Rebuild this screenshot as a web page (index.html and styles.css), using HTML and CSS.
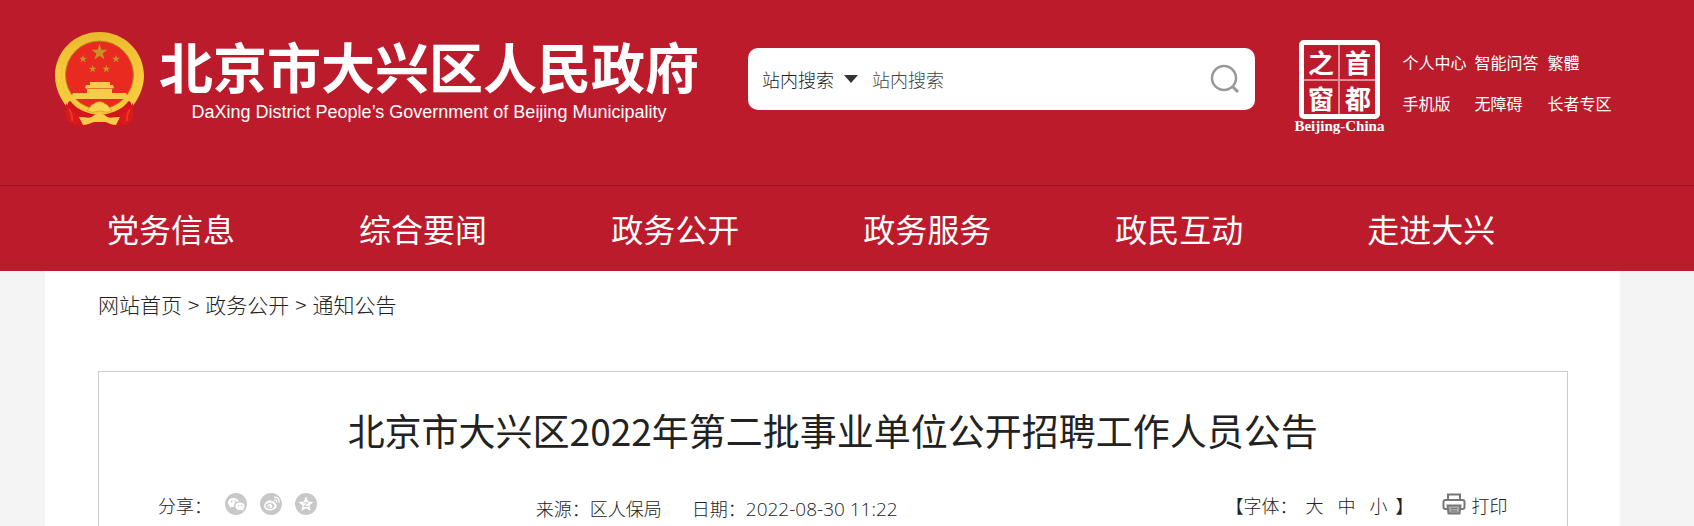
FILE: index.html
```html
<!DOCTYPE html>
<html lang="zh-CN">
<head>
    <meta charset="UTF-8">
    <meta name="viewport" content="width=device-width, initial-scale=1.0">
    <title>北京市大兴区人民政府</title>
    <link rel="stylesheet" href="styles.css">
</head>
<body>
    <header class="header">
        <div class="wrap top">
            <a href="#" class="logo">
                <svg class="emblem" viewBox="0 0 89 96" aria-hidden="true">
                    <defs>
                        <linearGradient id="gold" x1="0" y1="0" x2="0" y2="1">
                            <stop offset="0" stop-color="#e9b92c"/>
                            <stop offset=".5" stop-color="#f9cb3c"/>
                            <stop offset="1" stop-color="#f6c93f"/>
                        </linearGradient>
                        <path id="star" d="M0-10 2.3-3.1 9.5-3.1 3.7 1.2 5.9 8.1 0 3.8-5.9 8.1-3.7 1.2-9.5-3.1-2.3-3.1z"/>
                    </defs>
                    <path d="M12 64 Q9 78 12 89 Q18 96 30 95 L44 92 L60 95 Q72 96 77 89 Q80 78 77 64 Q60 80 44 80 Q28 80 12 64z" fill="#d3161c"/>
                    <path d="M44.500 1 C69 1 89 20 89 45 C89 58 82 70 77 76 C76 70 74 68 72 72 C66 79 56 83 44.500 84 C33 83 23 79 17 72 C15 68 13 70 12 76 C7 70 0 58 0 45 C0 20 20 1 44.500 1z" fill="url(#gold)"/>
                    <circle cx="44.500" cy="44" r="38" fill="none" stroke="#f0bd35" stroke-width="1" stroke-dasharray="3 2"/>
                    <circle cx="44.500" cy="44" r="34" fill="#e92a20" stroke="#b98a20" stroke-width="1"/>
                    <g fill="#c79127">
                        <use href="#star" transform="translate(44.500 21.500) scale(.85)"/>
                        <use href="#star" transform="translate(28 28) scale(.42)"/>
                        <use href="#star" transform="translate(61 28) scale(.42)"/>
                        <use href="#star" transform="translate(37.700 38) scale(.42)"/>
                        <use href="#star" transform="translate(51.300 38) scale(.42)"/>
                    </g>
                    <path d="M35 51h20v3h3l1 3-2 1v4h14l3 6H15l3-6h14v-4l-2-1 1-3h4z" fill="#f8cc49"/>
                    <path d="M32 57.500h26" stroke="#dc7a2a" stroke-width="1"/>
                    <path d="M11 72q5 8 13 12l4 3-8 7q-6-2-8-5-2-8-1-17zM78 72q-5 8-13 12l-4 3 8 7q6-2 8-5 2-8 1-17z" fill="#d81a1c"/>
                    <path d="M32 79c3 0 3-6 7-6 2-3 9-3 11 0 4 0 4 6 7 6-4 4-8 1-12 1s-9 3-13-1z" fill="#fbd34f" stroke="#c9941f" stroke-width=".6"/>
                    <path d="M24 86c7 0 11 2 14-1 4-3 9-3 13 0 3 3 7 1 14 1l-4 8c-6 0-8-3-11-3s-9 0-11 0-5 3-11 3z" fill="#f8cc49"/>
                    <path d="M14 78q4 7 3 12M75 78q-4 7-3 12" fill="none" stroke="#ee3526" stroke-width="2"/>
                </svg>
                <span class="logo-text">
                    <span class="logo-cn">北京市大兴区人民政府</span>
                    <span class="logo-en">DaXing District People’s Government of Beijing Municipality</span>
                </span>
            </a>
            <form class="search">
                <select class="search-type" aria-label="搜索范围">
                    <option>站内搜索</option>
                </select>
                <svg class="caret" viewBox="0 0 14 8" aria-hidden="true"><path d="M0 0h14L7 8z" fill="#333"/></svg>
                <input type="text" class="search-input" placeholder="站内搜索" aria-label="站内搜索">
                <button type="submit" class="search-btn" aria-label="搜索">
                    <svg viewBox="0 0 30 30" fill="none" stroke="#999" stroke-width="2.500"><circle cx="14" cy="14" r="12"/><path d="M22 22l6 6" stroke-width="3"/></svg>
                </button>
            </form>
            <a href="#" class="seal">
                <span class="seal-box">
                    <span>之</span><span>首</span>
                    <span>窗</span><span>都</span>
                </span>
                <span class="seal-en">Beijing-China</span>
            </a>
            <div class="links">
                <a href="#">个人中心</a>
                <a href="#">智能问答</a>
                <a href="#">繁體</a>
                <a href="#">手机版</a>
                <a href="#">无障碍</a>
                <a href="#">长者专区</a>
            </div>
        </div>
        <nav class="nav">
            <ul class="wrap">
                <li><a href="#">党务信息</a></li>
                <li><a href="#">综合要闻</a></li>
                <li><a href="#">政务公开</a></li>
                <li><a href="#">政务服务</a></li>
                <li><a href="#">政民互动</a></li>
                <li><a href="#">走进大兴</a></li>
            </ul>
        </nav>
    </header>
    <main class="wrap main">
        <div class="crumb">
            <a href="#">网站首页</a>
            <span>&gt;</span>
            <a href="#">政务公开</a>
            <span>&gt;</span>
            <a href="#">通知公告</a>
        </div>
        <article class="article">
            <h1>北京市大兴区2022年第二批事业单位公开招聘工作人员公告</h1>
            <div class="meta">
                <div class="share">
                    <span>分享：</span>
                    <a href="#" aria-label="微信">
                        <svg viewBox="0 0 22 22"><circle cx="11" cy="11" r="11" fill="#c8c8c8"/><path d="M8.500 5C5.300 5 3 7 3 9.500c0 1.400.7 2.600 1.900 3.400L4.400 15l2.200-1.200c.6.2 1.300.2 1.900.2h.6C8.500 11 11 8.400 14 8.600 13.500 6.500 11.300 5 8.500 5z" fill="#fff"/><path d="M15 9.500c-2.700 0-4.700 1.700-4.700 3.800s2 3.800 4.700 3.800c.6 0 1.100-.1 1.600-.2l1.900 1-.5-1.700c1-.7 1.600-1.700 1.600-2.900 0-2.100-2-3.800-4.600-3.800z" fill="#fff"/><g fill="#c8c8c8"><circle cx="6.700" cy="8.500" r=".9"/><circle cx="10.400" cy="8.500" r=".9"/><circle cx="13.500" cy="12.500" r=".7"/><circle cx="16.600" cy="12.500" r=".7"/></g></svg>
                    </a>
                    <a href="#" aria-label="微博">
                        <svg viewBox="0 0 22 22"><circle cx="11" cy="11" r="11" fill="#c8c8c8"/><path d="M9 7.200c1.600-.7 2.600 0 2.200 1.500 2.200-.9 3.900-.4 3.400 1.300 1.400.4 2.200 1.300 2.200 2.500 0 2.700-3.300 4.900-6.800 4.900-3.300 0-6-1.600-6-4.200C4 11 6.400 8.200 9 7.200z" fill="#fff"/><ellipse cx="10" cy="13" rx="4.300" ry="3" fill="#c8c8c8"/><ellipse cx="9.800" cy="13.200" rx="2.500" ry="2.100" fill="#fff"/><circle cx="9" cy="13.700" r="1" fill="#c8c8c8"/><path d="M14.200 6.800c1.700-.3 2.800 1 2.400 2.500M14 4.200c3.500-.6 5.900 2.200 5 5.600" fill="none" stroke="#fff" stroke-width="1.200"/></svg>
                    </a>
                    <a href="#" aria-label="QQ空间">
                        <svg viewBox="0 0 22 22"><circle cx="11" cy="11" r="11" fill="#c8c8c8"/><path d="M11 3.500l2.200 4.900 5.300.6-4 3.600 1.200 5.300-4.700-2.700-4.700 2.700 1.200-5.300-4-3.600 5.300-.6z" fill="#fff"/><path d="M8.300 9.800h5l-4.600 3.600c2 .3 3.700.2 5.300-.2" fill="none" stroke="#c8c8c8" stroke-width="1"/></svg>
                    </a>
                </div>
                <div class="source">
                    <span>来源：区人保局</span>
                    <span>日期：<time>2022-08-30 11:22</time></span>
                </div>
                <div class="tools">
                    <div class="sizes">
                        <span>【字体：</span>
                        <div class="size-list">
                            <a href="#">大</a>
                            <a href="#">中</a>
                            <a href="#">小</a>
                        </div>
                        <span>】</span>
                    </div>
                    <a href="#" class="print">
                        <svg viewBox="0 0 24 22" fill="none" stroke="#777" stroke-width="2"><path d="M6 7V1.500h12V7"/><path d="M6 16H3.500Q1.500 16 1.500 14V9Q1.500 7 3.500 7h17q2 0 2 2v5q0 2-2 2H18"/><path d="M5.500 12.500h13l-1 8h-11z" fill="#aaa"/><path d="M9 15.500h6M9 18h6" stroke-width="1"/></svg>
                        <span>打印</span>
                    </a>
                </div>
            </div>
        </article>
    </main>
</body>
</html>
```

FILE: styles.css
```css
* {
    margin: 0;
    padding: 0;
    box-sizing: border-box;
}
body {
    min-height: 100vh;
    display: flex;
    flex-direction: column;
    background-color: #f4f4f4;
    font-family: "Noto Sans CJK SC", sans-serif;
    font-size: 18px;
    line-height: 24px;
    color: #222;
}
a {
    color: inherit;
    text-decoration: none;
}
ul {
    list-style: none;
}
svg {
    display: block;
}
.wrap {
    width: 93%;
    margin-left: 45px;
}

/* header */
.header {
    background-color: #bc1b2c;
    color: #fff;
}
.top {
    display: flex;
    align-items: flex-start;
    padding: 31px 9px 0 10px;
    height: 185px;
}
.logo {
    display: flex;
    flex: none;
}
.emblem {
    width: 89px;
    height: 96px;
}
.logo-text {
    display: flex;
    flex-direction: column;
    align-items: center;
    margin-left: 15px;
    padding-top: 1px;
}
.logo-cn {
    font-size: 54px;
    font-weight: bold;
    line-height: 68px;
}
.logo-en {
    font-family: "Liberation Sans", Arial, sans-serif;
    font-size: 18px;
    line-height: 24px;
}
.search {
    display: flex;
    flex: 1;
    align-items: center;
    height: 62px;
    margin: 17px 39px 0 49px;
    padding: 0 15px 0 14px;
    background-color: #fff;
    border-radius: 10px;
}
.search-type {
    appearance: none;
    border: none;
    background: none;
    font-family: inherit;
    font-size: 18px;
    font-weight: 300;
    color: #222;
}
.caret {
    width: 14px;
    height: 8px;
    margin: 0 14px 0 10px;
}
.search-input {
    flex: 1;
    min-width: 0;
    border: none;
    outline: none;
    font-family: inherit;
    font-size: 18px;
    font-weight: 300;
}
.search-input::placeholder {
    color: #444;
}
.search-btn {
    width: 30px;
    height: 30px;
    border: none;
    background: none;
    cursor: pointer;
}
.seal {
    display: flex;
    flex: none;
    flex-direction: column;
    align-items: center;
    width: 90px;
    margin-top: 9px;
}
.seal-box {
    display: grid;
    grid-template-columns: 1fr 1fr;
    gap: 3px;
    width: 81px;
    height: 79px;
    border: 5px solid #fff;
    border-radius: 5px;
    background: linear-gradient(#e08f98, #e08f98) center / 2px 100% no-repeat, linear-gradient(#e08f98, #e08f98) center / 100% 2px no-repeat;
}
.seal-box span {
    font-size: 26px;
    font-weight: bold;
    line-height: 33px;
    text-align: center;
}
.seal-en {
    font-family: "Liberation Serif", serif;
    font-size: 15px;
    font-weight: bold;
    line-height: 14px;
}
.links {
    display: grid;
    flex: none;
    grid-template-columns: 72px 73px 64px;
    row-gap: 17px;
    margin: 19px 0 0 18px;
    font-size: 16px;
}
.nav {
    border-top: 1px solid #9b1524;
}
.nav ul {
    display: flex;
}
.nav li {
    width: 16%;
    text-align: center;
    font-size: 32px;
    line-height: 85px;
}

/* content */
.main {
    display: flex;
    flex: 1;
    flex-direction: column;
    padding: 0 52px 0 53px;
    background-color: #fff;
}
.crumb {
    display: flex;
    gap: 6px;
    padding: 19px 0 53px;
    font-size: 21px;
    font-weight: 300;
    line-height: 28px;
}
.article {
    flex: 1;
    border: 1px solid #ccc;
    border-bottom: none;
    padding: 34px 60px 0 59px;
}
.article h1 {
    font-size: 37px;
    font-weight: normal;
    line-height: 48px;
    text-align: center;
}
.meta {
    display: flex;
    margin-top: 39px;
    font-weight: 300;
}
.share {
    display: flex;
    flex: 0 0 28%;
    gap: 13px;
}
.share svg {
    width: 22px;
    height: 22px;
}
.source {
    display: flex;
    gap: 30px;
    margin-top: 3px;
}
.source time {
    font-family: "Open Sans", sans-serif;
    font-size: 19px;
}
.tools {
    display: flex;
    flex: 1;
    justify-content: flex-end;
    gap: 29px;
}
.sizes {
    display: flex;
    gap: 8px;
}
.size-list {
    display: flex;
    gap: 14px;
}
.print {
    display: flex;
    gap: 5px;
}
.print svg {
    width: 24px;
    height: 22px;
}
```
